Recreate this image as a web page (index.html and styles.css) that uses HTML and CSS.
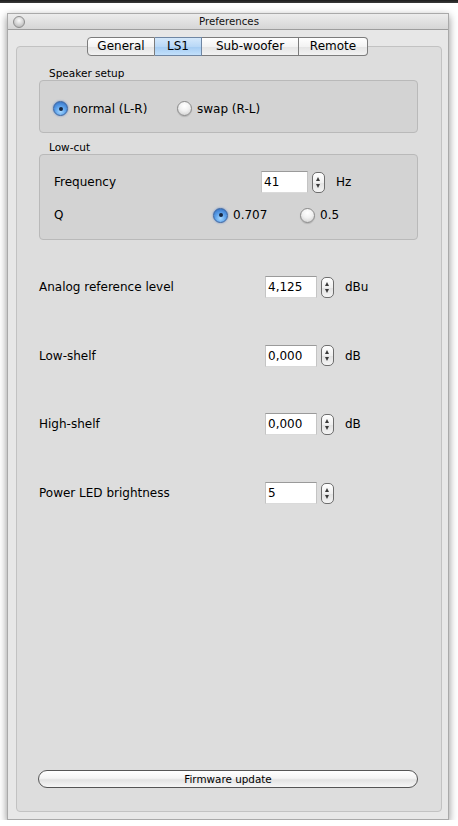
FILE: index.html
```html
<!DOCTYPE html>
<html>
<head>
<meta charset="utf-8">
<title>Preferences</title>
<link rel="stylesheet" href="styles.css">
</head>
<body>
<div class="topbar"></div>
<div class="window">
  <div class="titlebar">
    <span class="close"></span>
    <span class="title">Preferences</span>
  </div>
  <div class="content">
    <div class="tabs">
      <span class="tab tab-general">General</span><span class="tab tab-ls1 selected">LS1</span><span class="tab tab-sub">Sub-woofer</span><span class="tab tab-remote">Remote</span>
    </div>
    <div class="pane">
      <div class="group-label">Speaker setup</div>
      <div class="group speaker">
        <label class="radio radio-first"><span class="knob on"></span>normal (L-R)</label>
        <label class="radio"><span class="knob"></span>swap (R-L)</label>
      </div>

      <div class="group-label low">Low-cut</div>
      <div class="group lowcut">
        <div class="row">
          <span class="label label-freq">Frequency</span>
          <span class="field field-narrow">41</span>
          <span class="stepper"></span>
          <span class="unit">Hz</span>
        </div>
        <div class="row row-q">
          <span class="label label-q">Q</span>
          <label class="radio radio-q"><span class="knob on"></span>0.707</label>
          <label class="radio"><span class="knob"></span>0.5</label>
        </div>
      </div>

      <div class="settings">
        <div class="row">
          <span class="label label-wide">Analog reference level</span>
          <span class="field">4,125</span>
          <span class="stepper"></span>
          <span class="unit">dBu</span>
        </div>
        <div class="row">
          <span class="label label-wide">Low-shelf</span>
          <span class="field">0,000</span>
          <span class="stepper"></span>
          <span class="unit">dB</span>
        </div>
        <div class="row">
          <span class="label label-wide">High-shelf</span>
          <span class="field">0,000</span>
          <span class="stepper"></span>
          <span class="unit">dB</span>
        </div>
        <div class="row">
          <span class="label label-wide">Power LED brightness</span>
          <span class="field">5</span>
          <span class="stepper"></span>
        </div>
      </div>

      <button class="push">Firmware update</button>
    </div>
  </div>
</div>
</body>
</html>
```

FILE: styles.css
```css
* { box-sizing: border-box; }

html, body {
  margin: 0;
  padding: 0;
  background: #ffffff;
  font-family: "DejaVu Sans", "Liberation Sans", sans-serif;
  font-size: 12px;
  color: #000;
}

.topbar {
  height: 3px;
  background: linear-gradient(#1c1c1c, #3a3a3a);
}

.window {
  margin: 10px 0 0 7px;
  width: 442px;
  height: 807px;
  border: 1px solid #a9a9a9;
  background: #e7e7e7;
  box-shadow: 0 3px 8px rgba(0, 0, 0, 0.45);
  display: flex;
  flex-direction: column;
}

/* title bar with the single close light */
.titlebar {
  height: 16px;
  flex: none;
  background: linear-gradient(#ececec, #d6d6d6);
  border-bottom: 1px solid #9d9d9d;
  display: flex;
  align-items: center;
  justify-content: center;
  position: relative;
}

.close {
  position: absolute;
  left: 5px;
  top: 2px;
  width: 12px;
  height: 12px;
  border-radius: 50%;
  border: 1px solid #8d8d8d;
  background: radial-gradient(circle at 50% 35%, #fafafa 0, #d8d8d8 45%, #a9a9a9 100%);
}

.title {
  font-size: 10.2px;
  color: #111;
  line-height: 15px;
  padding-left: 2px;
}

.content {
  flex: 1;
  display: flex;
  flex-direction: column;
  padding: 7px 6px 7px 8px;
}

/* segmented tab strip sitting on the pane's top edge */
.tabs {
  display: flex;
  justify-content: center;
  position: relative;
  z-index: 1;
  height: 19px;
  padding-right: 3px;
}

.tab {
  height: 19px;
  line-height: 17px;
  text-align: center;
  font-size: 12px;
  border: 1px solid #7c7c7c;
  border-left: none;
  background: linear-gradient(#ffffff, #f3f3f3 50%, #e4e4e4 51%, #f2f2f2);
  color: #000;
}

.tab-general {
  width: 68px;
  border-left: 1px solid #7c7c7c;
  border-radius: 4px 0 0 4px;
}
.tab-ls1 { width: 47px; }
.tab-sub { width: 97px; }
.tab-remote {
  width: 69px;
  border-radius: 0 4px 4px 0;
}

.tab.selected {
  background: linear-gradient(#d4e8fb, #b9d8f6 50%, #a3cbf2 51%, #c2e0fb);
  border-color: #6f86a3;
}

.pane {
  flex: 1;
  margin-top: -10px;
  border: 1px solid #c2c2c2;
  border-radius: 4px;
  background: #dddddd;
  display: flex;
  flex-direction: column;
  padding: 20px 23px 23px 22px;
}

.group-label {
  font-size: 10.5px;
  line-height: 13px;
  padding-left: 10px;
}
.group-label.low { margin-top: 8px; }

.group {
  border: 1px solid #b9b9b9;
  border-radius: 4px;
  background: #d3d3d3;
}

.speaker {
  height: 53px;
  display: flex;
  align-items: center;
  padding: 4px 0 0 13px;
}

.lowcut {
  height: 86px;
  padding: 16px 0 0 14px;
}

.radio {
  display: flex;
  align-items: center;
  font-size: 12px;
  line-height: 16px;
}
.radio-first { width: 124px; }
.radio-q { width: 87px; }

.knob {
  width: 15px;
  height: 15px;
  border-radius: 50%;
  margin-right: 5px;
  border: 1px solid #8a8a8a;
  background: radial-gradient(circle at 50% 30%, #ffffff 0, #f1f1f1 45%, #c9c9c9 100%);
  box-shadow: 0 1px 1px rgba(0, 0, 0, 0.15);
  position: relative;
}

.knob.on {
  border-color: #3a64a0;
  background: radial-gradient(circle at 50% 72%, #a6d8ff 0, #5ea2ea 45%, #2a66bd 100%);
  box-shadow: 0 0 2px rgba(40, 100, 200, 0.7);
}
.knob.on::after {
  content: "";
  position: absolute;
  left: 4.5px;
  top: 4.5px;
  width: 4px;
  height: 4px;
  border-radius: 50%;
  background: #162640;
}

.row {
  display: flex;
  align-items: center;
  height: 22px;
}

.row-q { margin-top: 11px; }

.label { font-size: 12px; }
.label-freq { width: 207px; }
.label-q { width: 159px; }
.label-wide { width: 226px; }

.field {
  width: 52px;
  height: 22px;
  background: #ffffff;
  border-top: 1px solid #9a9a9a;
  border-left: 1px solid #c4c4c4;
  border-right: 1px solid #c4c4c4;
  border-bottom: 1px solid #dadada;
  padding-left: 2px;
  line-height: 21px;
  font-size: 12px;
}
.field-narrow { width: 47px; }

/* little up/down arrows control */
.stepper {
  width: 13px;
  height: 21px;
  margin-left: 4px;
  border: 1px solid #6e6e6e;
  border-radius: 5px;
  background: linear-gradient(#ffffff, #f0f0f0 50%, #e2e2e2 51%, #f4f4f4);
  position: relative;
}
.stepper::before,
.stepper::after {
  content: "";
  position: absolute;
  left: 3px;
  border-left: 2.5px solid transparent;
  border-right: 2.5px solid transparent;
}
.stepper::before {
  top: 4px;
  border-bottom: 4px solid #3a3a3a;
}
.stepper::after {
  bottom: 4px;
  border-top: 4px solid #3a3a3a;
}

.unit {
  margin-left: 11px;
  font-size: 12px;
}

.settings {
  margin-top: 36px;
  display: flex;
  flex-direction: column;
  gap: 46.7px;
}

.push {
  margin: auto 0 0 -1px;
  width: 380px;
  height: 18px;
  border: 1px solid #555;
  border-radius: 9px;
  background: linear-gradient(#ffffff, #f4f4f4 45%, #e3e3e3 55%, #f6f6f6);
  font-family: "DejaVu Sans", "Liberation Sans", sans-serif;
  font-size: 10.4px;
  color: #000;
  padding: 0;
  line-height: 16px;
}
```
